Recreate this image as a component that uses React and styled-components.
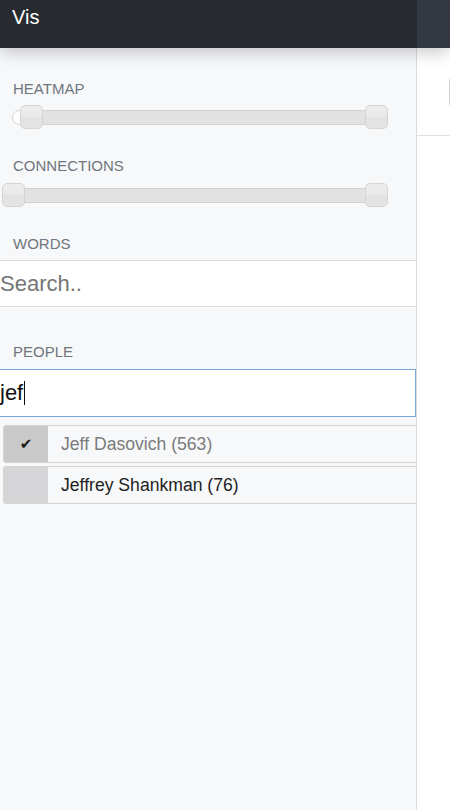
import React from "react";
import styled, { createGlobalStyle } from "styled-components";

const Global = createGlobalStyle`
  html, body { margin: 0; padding: 0; height: 100%; overflow: hidden; }
  body { font-family: "Liberation Sans", Arial, sans-serif; background: #fff; }
  #root { height: 100%; }
  * { box-sizing: border-box; }
`;

const Page = styled.div`
  display: flex;
  flex-direction: column;
  height: 100vh;
`;

const Header = styled.header`
  position: relative;
  z-index: 2;
  display: flex;
  height: 48px;
  flex: 0 0 48px;
  background: #353a42;
  box-shadow: 0 5px 16px rgba(0, 0, 0, 0.2);
`;

const Brand = styled.div`
  width: 417px;
  flex: 0 0 417px;
  background: #272b30;
  color: #fff;
  font-size: 20px;
  line-height: 23px;
  padding: 6px 12px;
`;

const Body = styled.div`
  flex: 1;
  display: flex;
  min-height: 0;
`;

const Sidebar = styled.aside`
  width: 417px;
  flex: 0 0 417px;
  background: #f7f8fa;
  border-right: 1px solid #dadcdf;
  padding-top: 32px;
  overflow: hidden;
  display: flex;
  flex-direction: column;
`;

const Label = styled.div`
  font-size: 15px;
  line-height: 17px;
  color: #6f757d;
  text-transform: uppercase;
  padding-left: 13px;
  margin-bottom: ${(p) => p.$gap ?? 8}px;
`;

const SliderWrap = styled.div`
  position: relative;
  height: 24px;
  margin: 0 40px ${(p) => p.$after ?? 28}px 13px;
`;

const Rail = styled.div`
  position: absolute;
  left: -1px;
  right: -1px;
  top: 5px;
  height: 15px;
  border: 1px solid #d2d2d2;
  border-radius: 8px;
  background: #fff;
  overflow: hidden;
`;

const Range = styled.div`
  position: absolute;
  top: 0;
  bottom: 0;
  right: 0;
  background: #e2e2e2;
`;

const Handle = styled.div`
  position: absolute;
  top: 0;
  width: 23px;
  height: 24px;
  margin-left: -11.5px;
  border: 1px solid #d4d4d4;
  border-radius: 5px;
  background: linear-gradient(#ececec 0%, #e9e9e9 50%, #e2e2e2 52%, #e4e4e4 100%);
`;

const Slider = ({ from, after }) => (
  <SliderWrap $after={after}>
    <Rail>
      <Range style={{ left: `${from}%` }} />
    </Rail>
    <Handle style={{ left: `${from}%` }} />
    <Handle style={{ left: "100%" }} />
  </SliderWrap>
);

const SearchInput = styled.input`
  display: block;
  width: 100%;
  height: 47px;
  margin: 0 0 36px 0;
  padding: 0;
  border: none;
  border-top: 1px solid #dcdcdc;
  border-bottom: 1px solid #dcdcdc;
  background: #fff;
  font-family: "Liberation Sans", Arial, sans-serif;
  font-size: 22px;
  color: #111;
  outline: none;
  &::placeholder { color: #757575; }
`;

const Field = styled.div`
  display: flex;
  align-items: center;
  height: 48px;
  margin: 0 0 8px -1px;
  width: calc(100% + 1px);
  border: 1px solid #7aa7dc;
  background: #fff;
  font-size: 22px;
  color: #111;
`;

const Caret = styled.span`
  display: inline-block;
  width: 1px;
  height: 24px;
  background: #111;
  margin-left: 1px;
`;

const Item = styled.div`
  display: flex;
  align-items: stretch;
  height: 38px;
  margin: 0 0 3px 3px;
  border: 1px solid #d4d4d4;
  border-right: none;
  border-radius: 3px 0 0 3px;
  overflow: hidden;
`;

const Check = styled.div`
  width: 44px;
  flex: 0 0 44px;
  display: flex;
  align-items: center;
  justify-content: center;
  background: ${(p) => (p.$checked ? "#c9c9c9" : "#d5d5d7")};
  color: #1a1a1a;
  font-family: "DejaVu Sans", sans-serif;
  font-size: 15px;
`;

const Name = styled.div`
  display: flex;
  align-items: center;
  padding-left: 13px;
  font-size: 17.6px;
  color: ${(p) => (p.$muted ? "#7b7b7b" : "#222")};
`;

const Main = styled.main`
  flex: 1;
  background: #fff;
  overflow: hidden;
`;

const Toolbar = styled.div`
  height: 88px;
  border-bottom: 1px solid #e0e0e0;
  padding: 30px 0 0 32px;
`;

const Box = styled.div`
  width: 300px;
  height: 28px;
  border: 1px solid #d0d0d0;
  border-left-width: 2px;
  border-radius: 3px;
`;

const people = [
  { name: "Jeff Dasovich (563)", checked: true },
  { name: "Jeffrey Shankman (76)", checked: false },
];

export default function App() {
  return (
    <Page>
      <Global />
      <Header>
        <Brand>Vis</Brand>
      </Header>
      <Body>
        <Sidebar>
          <Label>Heatmap</Label>
          <Slider from={5} after={28} />
          <Label $gap={9}>Connections</Label>
          <Slider from={0} after={28} />
          <Label>Words</Label>
          <SearchInput placeholder="Search.." readOnly />
          <Label $gap={9}>People</Label>
          <Field>
            jef
            <Caret />
          </Field>
          {people.map((p) => (
            <Item key={p.name}>
              <Check $checked={p.checked}>{p.checked ? "✔" : ""}</Check>
              <Name $muted={p.checked}>{p.name}</Name>
            </Item>
          ))}
        </Sidebar>
        <Main>
          <Toolbar>
            <Box />
          </Toolbar>
        </Main>
      </Body>
    </Page>
  );
}
